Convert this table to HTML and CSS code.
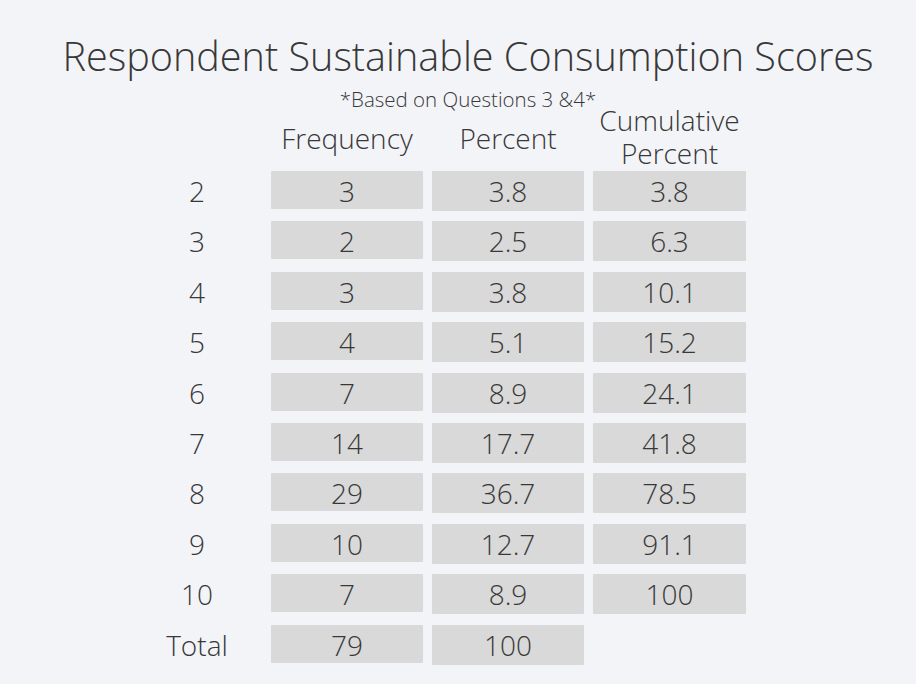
FILE: index.html
```html
<!DOCTYPE html>
<html lang="en">
<head>
<meta charset="utf-8">
<title>Respondent Sustainable Consumption Scores</title>
<link rel="stylesheet" href="styles.css">
</head>
<body>
<main class="slide">
  <h1 class="title">Respondent Sustainable Consumption Scores</h1>
  <p class="subtitle">*Based on Questions 3 &amp;4*</p>
  <div class="table">
    <div class="head">
      <div class="label"></div>
      <div class="col-head single">Frequency</div>
      <div class="col-head single">Percent</div>
      <div class="col-head">Cumulative<br>Percent</div>
    </div>
    <div class="body">
      <div class="label">2</div><div class="cell freq">3</div><div class="cell">3.8</div><div class="cell">3.8</div>
      <div class="label">3</div><div class="cell freq">2</div><div class="cell">2.5</div><div class="cell">6.3</div>
      <div class="label">4</div><div class="cell freq">3</div><div class="cell">3.8</div><div class="cell">10.1</div>
      <div class="label">5</div><div class="cell freq">4</div><div class="cell">5.1</div><div class="cell">15.2</div>
      <div class="label">6</div><div class="cell freq">7</div><div class="cell">8.9</div><div class="cell">24.1</div>
      <div class="label">7</div><div class="cell freq">14</div><div class="cell">17.7</div><div class="cell">41.8</div>
      <div class="label">8</div><div class="cell freq">29</div><div class="cell">36.7</div><div class="cell">78.5</div>
      <div class="label">9</div><div class="cell freq">10</div><div class="cell">12.7</div><div class="cell">91.1</div>
      <div class="label">10</div><div class="cell freq">7</div><div class="cell">8.9</div><div class="cell">100</div>
      <div class="label">Total</div><div class="cell freq">79</div><div class="cell">100</div><div class="blank"></div>
    </div>
  </div>
</main>
</body>
</html>
```
FILE: styles.css
```css
html, body {
  margin: 0;
  padding: 0;
  background: #f3f4f8;
}
body {
  width: 916px;
  height: 684px;
  overflow: hidden;
  font-family: "Open Sans", "DejaVu Sans", sans-serif;
  font-weight: 300;
  color: #383838;
}
.slide {
  padding: 28.5px 0 0 20px;
}
.title {
  margin: 0;
  font-size: 39.6px;
  line-height: 54px;
  font-weight: 300;
  text-align: center;
}
.subtitle {
  margin: 9px 0 0;
  font-size: 20.5px;
  line-height: 15px;
  text-align: center;
}
.table {
  margin-left: 112px;
}
.head,
.body {
  display: grid;
  grid-template-columns: 130px 152px 152px 153px;
  column-gap: 9px;
}
.head {
  height: 67.4px;
  margin-top: -2.9px;
  align-items: start;
}
.col-head {
  font-size: 28px;
  line-height: 33px;
  text-align: center;
}
.col-head.single {
  margin-top: 18px;
}
.body {
  row-gap: 10.4px;
  grid-auto-rows: 40px;
  align-items: start;
}
.label,
.cell {
  font-size: 28px;
  line-height: 40px;
  text-align: center;
}
.cell {
  height: 40px;
  background: #d9d9d9;
  border-radius: 1px;
}
.cell.freq {
  height: 38px;
}
```
